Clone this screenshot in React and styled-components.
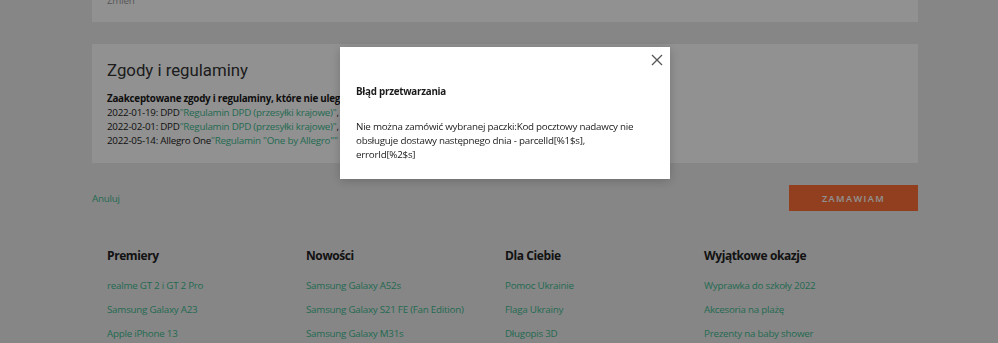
import React from 'react'
import styled, { createGlobalStyle } from 'styled-components'

const GlobalStyle = createGlobalStyle`
  html, body {
    margin: 0;
    padding: 0;
    background: #ececec;
    font-family: 'Open Sans', 'Liberation Sans', sans-serif;
    letter-spacing: -0.25px;
    color: #333;
    overflow: hidden;
  }
`

const footer = [
  { title: 'Premiery', links: ['realme GT 2 i GT 2 Pro', 'Samsung Galaxy A23', 'Apple iPhone 13'] },
  { title: 'Nowości', links: ['Samsung Galaxy A52s', 'Samsung Galaxy S21 FE (Fan Edition)', 'Samsung Galaxy M31s'] },
  { title: 'Dla Ciebie', links: ['Pomoc Ukrainie', 'Flaga Ukrainy', 'Długopis 3D'] },
  { title: 'Wyjątkowe okazje', links: ['Wyprawka do szkoły 2022', 'Akcesoria na plażę', 'Prezenty na baby shower'] }
]

const consents = [
  { date: '2022-01-19', who: 'DPD', doc: '"Regulamin DPD (przesyłki krajowe)"', tail: ',' },
  { date: '2022-02-01', who: 'DPD', doc: '"Regulamin DPD (przesyłki krajowe)"', tail: ',' },
  { date: '2022-05-14', who: 'Allegro One', doc: '"Regulamin "One by Allegro""', tail: '' }
]

export default function App () {
  return (
    <>
      <GlobalStyle />
      <Page>
        <TopCard>
          <Muted>Zmień</Muted>
        </TopCard>
        <Card>
          <Heading>Zgody i regulaminy</Heading>
          <Lines>
            <strong>Zaakceptowane zgody i regulaminy, które nie ulegają zmianie</strong>
            {consents.map((c, i) => (
              <div key={i}>
                {c.date}: {c.who}<Link>{c.doc}</Link>{c.tail}
              </div>
            ))}
          </Lines>
        </Card>
        <Actions>
          <Link>Anuluj</Link>
          <OrderButton>Zamawiam</OrderButton>
        </Actions>
        <Footer>
          {footer.map(col => (
            <Column key={col.title}>
              <ColumnTitle>{col.title}</ColumnTitle>
              {col.links.map(l => <FooterLink key={l}>{l}</FooterLink>)}
            </Column>
          ))}
        </Footer>
      </Page>
      <Overlay />
      <Modal>
        <Close aria-label='Zamknij'>
          <svg width='12' height='12' viewBox='0 0 12 12'>
            <path d='M1 1 L11 11 M11 1 L1 11' stroke='#555' strokeWidth='1.3' fill='none' />
          </svg>
        </Close>
        <ModalTitle>Błąd przetwarzania</ModalTitle>
        <ModalText>
          Nie można zamówić wybranej paczki:Kod pocztowy nadawcy nie obsługuje dostawy następnego dnia - parcelId[%1$s], errorId[%2$s]
        </ModalText>
      </Modal>
    </>
  )
}

const Page = styled.div`
  width: 826px;
  margin-left: 92px;
  display: flex;
  flex-direction: column;
`

const TopCard = styled.div`
  background: #fff;
  height: 47px;
  margin-top: -25px;
  padding: 12px 15px 0;
  box-sizing: border-box;
`

const Muted = styled.span`
  font-size: 9.8px;
  color: #999;
`

const Card = styled.div`
  background: #fff;
  margin-top: 22px;
  padding: 14px 15px 15px;
`

const Heading = styled.h2`
  margin: 0 0 10px;
  font-family: Roboto, 'Liberation Sans', sans-serif;
  font-weight: 400;
  font-size: 16.8px;
  letter-spacing: 0;
  line-height: 24px;
  color: #333;
`

const Lines = styled.div`
  font-size: 9.8px;
  line-height: 14px;
  color: #222;
  white-space: nowrap;
  strong {
    font-weight: 700;
    color: #1a1a1a;
  }
`

const Link = styled.span`
  color: #3dbb90;
  font-size: 9.8px;
  cursor: pointer;
`

const Actions = styled.div`
  margin-top: 22px;
  display: flex;
  justify-content: space-between;
  align-items: center;
`

const OrderButton = styled.button`
  width: 129px;
  height: 26px;
  border: none;
  background: #ff7036;
  color: #fff;
  font-family: 'Open Sans', 'Liberation Sans', sans-serif;
  font-size: 9.2px;
  font-weight: 600;
  letter-spacing: 1.4px;
  text-transform: uppercase;
  cursor: pointer;
`

const Footer = styled.div`
  margin-top: 37px;
  padding: 0 15px;
  display: grid;
  grid-template-columns: repeat(4, 199px);
`

const Column = styled.div`
  display: flex;
  flex-direction: column;
  gap: 8.3px;
`

const ColumnTitle = styled.h4`
  margin: 0 0 5.5px;
  font-size: 12px;
  letter-spacing: -0.4px;
  line-height: 16px;
  font-weight: 700;
  color: #222;
`

const FooterLink = styled.a`
  font-size: 9.8px;
  line-height: 16px;
  color: #3dbb90;
`

const Overlay = styled.div`
  position: fixed;
  inset: 0;
  background: rgba(0, 0, 0, 0.43);
`

const Modal = styled.div`
  position: fixed;
  left: 340px;
  top: 47px;
  width: 330px;
  height: 132px;
  box-sizing: border-box;
  background: #fff;
  padding: 37px 30px 0 16px;
  box-shadow: 0 2px 10px rgba(0, 0, 0, 0.2);
`

const Close = styled.button`
  position: absolute;
  top: 7px;
  right: 7px;
  width: 12px;
  height: 12px;
  padding: 0;
  border: none;
  background: none;
  display: flex;
  cursor: pointer;
`

const ModalTitle = styled.div`
  font-size: 9.8px;
  font-weight: 700;
  line-height: 16px;
  color: #1a1a1a;
`

const ModalText = styled.p`
  margin: 20px 0 0;
  font-size: 9.8px;
  line-height: 14px;
  color: #222;
`
